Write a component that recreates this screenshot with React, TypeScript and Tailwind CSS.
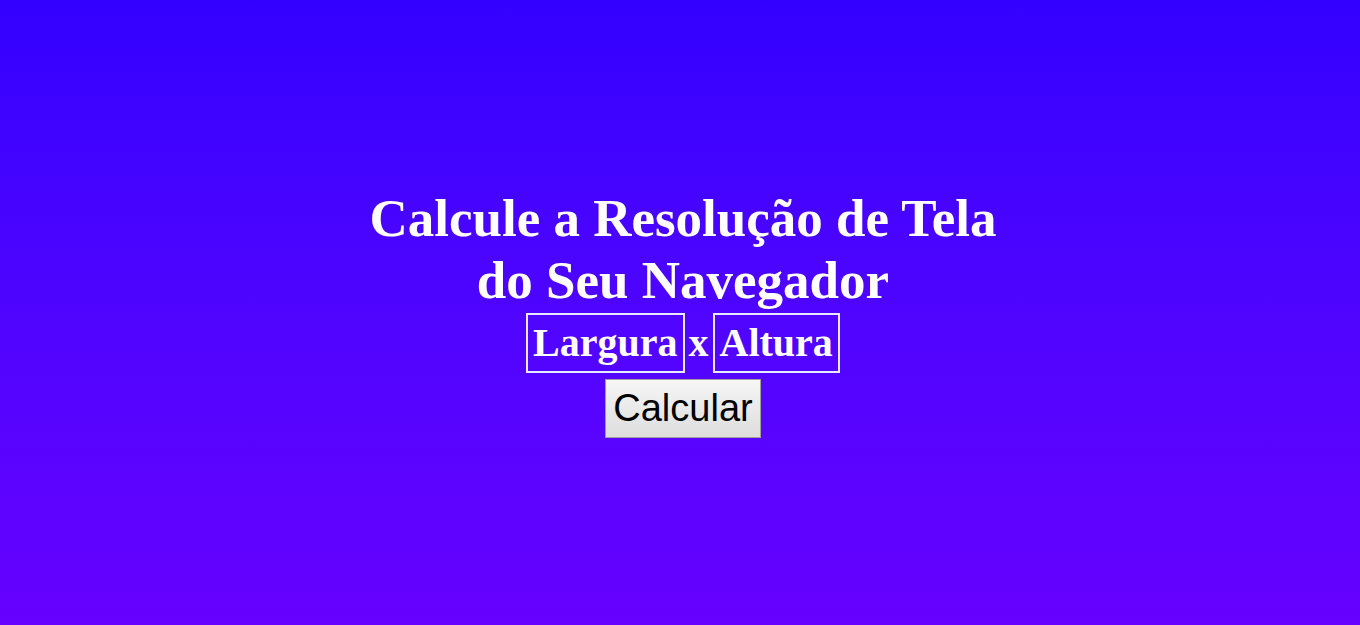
export default function App() {
  return (
    <div className="min-h-screen w-full flex flex-col items-center justify-center pl-[6px] bg-gradient-to-b from-[#3300ff] to-[#6600ff] text-white font-['Liberation_Serif',serif]">
      <h1 className="text-[53px] leading-[62px] font-bold text-center">
        Calcule a Resolução de Tela
        <br />
        do Seu Navegador
      </h1>
      <div className="flex items-center gap-[4px] text-[40px] font-bold mt-[2px]">
        <span className="border-2 border-[#e8e8ff] px-[5px] h-[60px] flex items-center">Largura</span>
        <span>x</span>
        <span className="border-2 border-[#e8e8ff] px-[5px] h-[60px] flex items-center">Altura</span>
      </div>
      <button className="mt-[6px] h-[59px] px-[7px] text-[38px] text-black font-['Liberation_Sans',sans-serif] bg-gradient-to-b from-[#f6f6f6] to-[#dddddd] border border-[#a0a0a0]">
        Calcular
      </button>
    </div>
  );
}
